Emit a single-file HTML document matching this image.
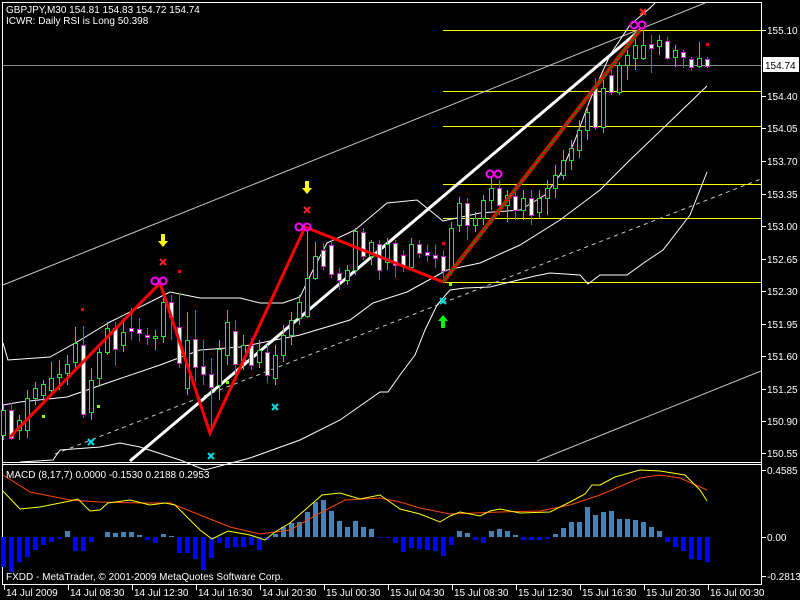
<!DOCTYPE html>
<html><head><meta charset="utf-8"><style>
html,body{margin:0;padding:0;background:#000;width:800px;height:600px;overflow:hidden}
svg{display:block}
text{font-family:"Liberation Sans",sans-serif;font-size:10px;fill:#fff}
</style></head><body>
<svg id="s" width="800" height="600" xmlns="http://www.w3.org/2000/svg">
<rect width="800" height="600" fill="#000"/>
<line x1="2" y1="2.5" x2="761" y2="2.5" stroke="#fff"/>
<line x1="2.5" y1="2" x2="2.5" y2="585" stroke="#fff"/>
<line x1="761.5" y1="2" x2="761.5" y2="585" stroke="#fff"/>
<line x1="2" y1="462.5" x2="761" y2="462.5" stroke="#fff"/>
<line x1="2" y1="464.5" x2="761" y2="464.5" stroke="#fff"/>
<line x1="2" y1="584.5" x2="761" y2="584.5" stroke="#fff"/>
<line x1="3" y1="65.5" x2="761" y2="65.5" stroke="#8c8c8c"/>
<g stroke="#ffff00" stroke-width="1">
<line x1="443" y1="30.5" x2="761" y2="30.5"/>
<line x1="443" y1="91.5" x2="761" y2="91.5"/>
<line x1="443" y1="126.5" x2="761" y2="126.5"/>
<line x1="443" y1="184.5" x2="761" y2="184.5"/>
<line x1="443" y1="218.5" x2="761" y2="218.5"/>
<line x1="443" y1="282.5" x2="761" y2="282.5"/>
</g>
<line x1="3" y1="285" x2="705" y2="3" stroke="#c8c8c8"/>
<line x1="537" y1="461" x2="761" y2="371" stroke="#c8c8c8"/>
<line x1="55" y1="454" x2="761" y2="179" stroke="#c8c8c8" stroke-dasharray="4,4"/>
<g fill="none" stroke="#fff" stroke-width="1">
<polyline points="3,343 8,360 50,357 77,342 110,322 160,297 170,292 200,298 240,298 260,303 283,303 300,297 313,270 327,243 355,230 387,203 417,200 443,221 480,213 520,210 545,195 560,175 575,140 590,100 610,55 630,25 650,8 655,3"/>
<polyline points="3,405 20,402 67,397 110,382 160,365 200,350 240,347 300,335 350,320 373,303 407,292 447,270 480,263 520,245 560,220 600,190 630,160 707,86"/>
<polyline points="20,462 53,460 60,450 100,447 120,443 140,447 180,460 205,470 250,458 300,440 340,420 380,392 388,392 400,375 415,355 425,330 437,305 450,290 465,288 490,287 510,282 535,276 550,273 580,275 588,284 600,275 627,275 645,262 663,250 690,215 707,172"/>
</g>
<line x1="130" y1="461" x2="640" y2="30" stroke="#fff" stroke-width="3"/>
<g id="candles"></g>
<polyline points="10,437 160,283 210,433 305,227 443,282" fill="none" stroke="#ff0000" stroke-width="3"/>
<line x1="443" y1="282" x2="640" y2="30" stroke="#ff0000" stroke-width="4"/>
<line x1="443" y1="282" x2="640" y2="30" stroke="#008000" stroke-width="2" stroke-dasharray="3,2"/>
<g fill="none" stroke="#ff00ff" stroke-width="2">
<circle cx="155" cy="281" r="3.5"/><circle cx="163" cy="281" r="3.5"/>
<circle cx="299" cy="227" r="3.5"/><circle cx="307" cy="227" r="3.5"/>
<circle cx="490" cy="174" r="3.5"/><circle cx="498" cy="174" r="3.5"/>
<circle cx="634" cy="25" r="3.5"/><circle cx="642" cy="25" r="3.5"/>
</g>
<g stroke="#ff2020" stroke-width="2">
<path d="M160,259 l6,6 M166,259 l-6,6"/><path d="M304,207 l6,6 M310,207 l-6,6"/><path d="M640,9 l6,6 M646,9 l-6,6"/>
</g>
<g stroke="#00e0e0" stroke-width="2">
<path d="M88,439 l6,6 M94,439 l-6,6"/><path d="M208,453 l6,6 M214,453 l-6,6"/><path d="M272,404 l6,6 M278,404 l-6,6"/><path d="M440,298 l6,6 M446,298 l-6,6"/>
</g>
<g fill="#ffff00">
<path d="M161,234 h4 v7 h3 l-5,6 l-5,-6 h3z"/><path d="M305,181 h4 v7 h3 l-5,6 l-5,-6 h3z"/>
</g>
<path fill="#00ff00" d="M441,328 h4 v-7 h3 l-5,-6 l-5,6 h3z"/>
<g fill="#ff0000">
<rect x="81" y="308" width="3" height="3"/><rect x="178" y="270" width="3" height="3"/><rect x="442" y="242" width="3" height="3"/><rect x="706" y="43" width="3" height="3"/>
</g>
<g fill="#7fff00">
<rect x="42" y="415" width="3" height="3"/><rect x="97" y="405" width="3" height="3"/><rect x="226" y="381" width="3" height="3"/><rect x="449" y="283" width="3" height="3"/>
</g>
<g id="hist"></g>
<polyline fill="none" stroke="#ff4500" points="3,475 30,492 70,500 100,502 140,503 170,503 200,515 230,527 260,534 290,530 320,513 345,500 380,498 400,502 420,508 450,514 500,512 540,511 570,505 600,495 640,478 660,475 680,478 707,490"/>
<polyline fill="none" stroke="#ffff00" points="3,491 20,509 40,507 70,501 78,499 90,511 100,510 108,503 130,500 150,505 165,503 175,505 200,530 212,539 228,531 250,535 265,540 275,532 290,523 322,495 340,493 360,499 380,495 400,509 420,514 440,522 450,516 460,512 480,516 490,511 500,509 520,513 550,512 570,502 585,494 592,485 600,485 615,477 640,470 660,471 685,475 700,490 707,501"/>
<text x="6" y="13">GBPJPY,M30  154.81 154.83 154.72 154.74</text>
<text x="6" y="24">ICWR: Daily RSI is Long 50.398</text>
<text x="6" y="478">MACD  (8,17,7) 0.0000 -0.1530 0.2188 0.2953</text>
<text x="6" y="580">FXDD - MetaTrader, © 2001-2009 MetaQuotes Software Corp.</text>
<g id="axis"></g>
<rect x="763" y="57" width="36" height="15" fill="#fff"/>
<text x="765" y="69" style="fill:#000">154.74</text>
</svg>
<script>
var NS="http://www.w3.org/2000/svg";
function el(p,t,a){var e=document.createElementNS(NS,t);for(var k in a)e.setAttribute(k,a[k]);p.appendChild(e);return e;}
var C=[[435,410,440,405],[410,438,403,440],[430,420,440,415],[430,398,438,390],[398,388,405,382],[395,384,402,380],[390,378,395,362],[377,374,390,360],[373,364,385,355],[362,343,370,327],[345,414,326,418],[412,380,420,368],[378,352,385,348],[352,328,355,322],[328,349,322,366],[345,332,352,318],[328,331,308,340],[329,333,318,342],[335,337,328,345],[338,336,330,350],[336,302,343,298],[302,317,295,340],[327,363,293,368],[388,340,395,312],[339,367,310,382],[366,374,340,385],[374,387,358,433],[385,349,400,340],[355,322,365,310],[331,364,320,375],[360,345,370,335],[345,365,338,370],[362,350,368,340],[352,375,345,383],[378,355,385,345],[355,335,362,325],[335,320,345,312],[318,302,325,295],[316,278,318,228],[278,256,280,242],[250,266,243,270],[245,274,240,278],[273,280,268,290],[280,270,285,265],[270,231,275,228],[232,256,228,260],[256,242,265,240],[244,270,240,280],[262,244,270,238],[243,265,240,278],[255,266,250,272],[267,244,270,238],[244,253,240,258],[252,255,245,262],[255,258,245,268],[256,271,250,278],[270,228,275,222],[225,203,232,197],[203,225,198,240],[225,218,232,212],[218,200,225,195],[200,188,210,178],[188,205,180,215],[205,195,222,190],[196,210,185,220],[210,198,220,190],[198,215,190,225],[212,198,218,190],[198,188,215,180],[188,175,198,165],[175,160,180,150],[160,148,170,140],[150,130,158,120],[130,112,140,105],[88,127,78,130],[127,88,133,80],[75,92,70,95],[92,65,95,62],[65,55,80,50],[58,45,70,38],[58,45,60,30],[44,48,35,73],[46,40,55,35],[41,58,37,60],[57,50,67,45],[52,57,50,68],[59,67,57,71],[66,58,68,42],[59,66,57,68]];
var g=document.getElementById("candles");
C.forEach(function(c,i){var x=3+8*i,o=c[0],cl=c[1],h=Math.min(c[2],c[3]),l=Math.max(c[2],c[3]);
var bull=cl<o,col=bull?"#00ff00":"#ff00ff",top=Math.min(o,cl),bot=Math.max(o,cl);
el(g,"line",{x1:x+0.5,y1:h,x2:x+0.5,y2:l,stroke:col});
el(g,"rect",{x:x-1.5,y:top+0.5,width:4,height:Math.max(bot-top,2),fill:bull?"#000":"#fff",stroke:col,"stroke-width":1});});
var H=[-30,-35,-25,-20,-13,-8,-5,-2,6,-14,-14,-5,0,5,4,5,5,2,-3,-6,3,1,-16,-16,-22,-33,-21,-6,-11,-10,-10,-8,-13,-3,3,10,14,15,25,35,37,26,16,10,16,10,8,-1,-1,-6,-15,-11,-12,-13,-14,-19,-8,6,4,-3,-6,6,8,6,2,-3,-3,-3,-2,3,9,15,15,30,22,25,26,18,18,17,15,10,6,-5,-10,-14,-22,-23,-25];
var hg=document.getElementById("hist");
H.forEach(function(v,i){var x=1+8*i;if(v==0)return;
el(hg,"rect",{x:x,y:v>0?537-v:537,width:5,height:Math.abs(v),fill:v>0?"#4682b4":"#0000ff"});});
var ax=document.getElementById("axis");
[["155.10",30],["154.40",96],["154.05",128],["153.70",161],["153.35",194],["153.00",226],["152.65",259],["152.30",291],["151.95",324],["151.60",356],["151.25",389],["150.90",421],["150.55",453],["0.4585",470],["0.00",537],["-0.2813",576]].forEach(function(a){
el(ax,"line",{x1:762,y1:a[1]+0.5,x2:766,y2:a[1]+0.5,stroke:"#fff"});
var t=el(ax,"text",{x:767,y:a[1]+4});t.textContent=a[0];});
["14 Jul 2009","14 Jul 08:30","14 Jul 12:30","14 Jul 16:30","14 Jul 20:30","15 Jul 00:30","15 Jul 04:30","15 Jul 08:30","15 Jul 12:30","15 Jul 16:30","15 Jul 20:30","16 Jul 00:30"].forEach(function(s,i){
var x=4+64*i;el(ax,"line",{x1:x+0.5,y1:585,x2:x+0.5,y2:590,stroke:"#fff"});
var t=el(ax,"text",{x:x+2,y:596});t.textContent=s;});
</script>
</body></html>
